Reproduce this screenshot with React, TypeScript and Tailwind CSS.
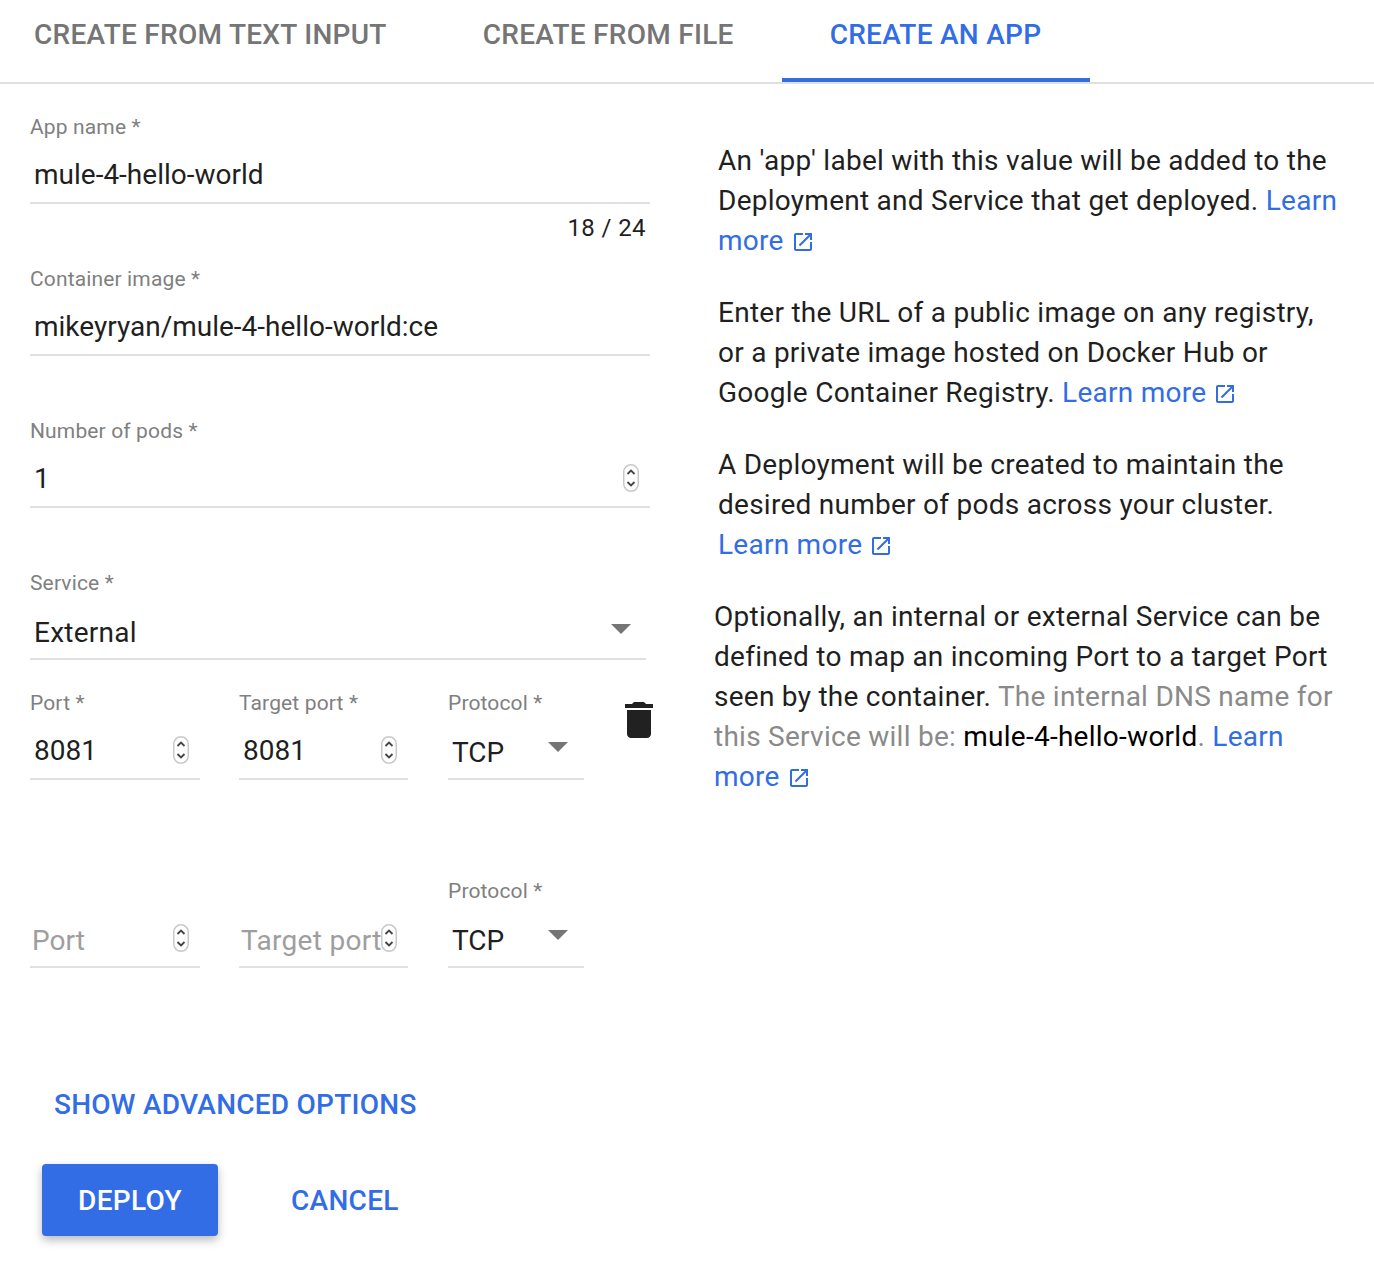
import React from "react";

const Spinner = () => (
  <svg width="16" height="28" viewBox="0 0 16 28" className="shrink-0 mt-[5px]">
    <rect x="0.75" y="0.75" width="14.5" height="26.5" rx="7.25" fill="#fff" stroke="#c9c9c9" strokeWidth="1.5" />
    <path d="M4.5 10 8 6.5 11.5 10" fill="none" stroke="#444" strokeWidth="1.8" />
    <path d="M4.5 18 8 21.5 11.5 18" fill="none" stroke="#444" strokeWidth="1.8" />
  </svg>
);

const Caret = () => (
  <svg width="20" height="10" viewBox="0 0 20 10" className="shrink-0">
    <path d="M0 0h20L10 10z" fill="#757575" />
  </svg>
);

const Ext = () => (
  <svg width="24" height="24" viewBox="0 0 24 24" fill="#326de6" className="inline-block align-[-4px] ml-[7px]">
    <path d="M19 19H5V5h7V3H5c-1.11 0-2 .9-2 2v14c0 1.1.89 2 2 2h14c1.1 0 2-.9 2-2v-7h-2v7zM14 3v2h3.59l-9.83 9.83 1.41 1.41L19 6.41V10h2V3h-7z" />
  </svg>
);

const Label = ({ children }: { children: React.ReactNode }) => (
  <div className="h-7 text-[21px] leading-[26px] text-[#808080] tracking-[0.14px] whitespace-nowrap">{children}</div>
);

const Field = ({
  label,
  children,
  className,
}: {
  label?: string;
  children: React.ReactNode;
  className?: string;
}) => (
  <div className={className}>
    <div className="h-7">{label ? <Label>{label}</Label> : null}</div>
    <div className="h-[62px] border-b-2 border-[#e0e0e0] text-[28px] leading-10 text-[#1f1f1f]">
      {children}
    </div>
  </div>
);

const Learn = ({ children }: { children: React.ReactNode }) => (
  <a className="text-[#326de6]">{children}</a>
);

export default function App() {
  return (
    <div className="w-[1374px] h-[1286px] bg-white font-['Roboto',sans-serif] overflow-hidden">
      <div className="flex h-[84px] border-b-2 border-[#e0e0e0] text-[28px] font-medium tracking-[0.28px]">
        <div className="pl-[34px] pr-[48px] h-[82px] pt-[15px] leading-10 text-[#757575]">CREATE FROM TEXT INPUT</div>
        <div className="px-[48px] h-[82px] pt-[15px] leading-10 text-[#757575]">CREATE FROM FILE</div>
        <div className="pl-[48px] pr-[49px] h-[82px] pt-[15px] leading-10 text-[#326de6] border-b-[4px] border-[#326de6]">CREATE AN APP</div>
      </div>

      <div className="flex">
        <div className="w-[620px] ml-[30px] shrink-0 pt-[30px]">
          <div className="h-[152px]">
            <Field label="App name *">
              <div className="pl-1 pt-[13px]">mule-4-hello-world</div>
            </Field>
            <div className="text-right pr-1 text-[24px] leading-7 mt-[10px] text-[#1f1f1f] tracking-[0.4px]">18 / 24</div>
          </div>
          <div className="h-[152px]">
            <Field label="Container image *">
              <div className="pl-1 pt-[13px]">mikeyryan/mule-4-hello-world:ce</div>
            </Field>
          </div>
          <div className="h-[152px]">
            <Field label="Number of pods *">
              <div className="pl-1 pt-[13px] pr-[11px] flex justify-between items-start">
                <span>1</span>
                <Spinner />
              </div>
            </Field>
          </div>
          <div className="h-[120px] w-[616px]">
            <Field label="Service *">
              <div className="pl-1 pt-[15px] pr-[15px] flex justify-between">
                <span className="tracking-[0.25px]">External</span>
                <span className="pt-[11px]"><Caret /></span>
              </div>
            </Field>
          </div>
          <div className="h-[188px] flex">
            <Field label="Port *" className="w-[170px] shrink-0">
              <div className="pl-1 pt-[13px] pr-[11px] flex justify-between items-start">
                <span>8081</span>
                <Spinner />
              </div>
            </Field>
            <Field label="Target port *" className="w-[169px] ml-[39px] shrink-0">
              <div className="pl-1 pt-[13px] pr-[11px] flex justify-between items-start">
                <span>8081</span>
                <Spinner />
              </div>
            </Field>
            <Field label="Protocol *" className="w-[136px] ml-[40px] shrink-0">
              <div className="pl-1 pt-[15px] pr-[16px] flex justify-between">
                <span>TCP</span>
                <span className="pt-[9px]"><Caret /></span>
              </div>
            </Field>
            <svg width="48" height="48" viewBox="0 0 24 24" fill="#212121" className="ml-[31px] mt-[6px] shrink-0">
              <path d="M6 19c0 1.1.9 2 2 2h8c1.1 0 2-.9 2-2V7H6v12zM19 4h-3.5l-1-1h-5l-1 1H5v2h14V4z" />
            </svg>
          </div>
          <div className="h-[207px] flex">
            <Field className="w-[170px] shrink-0">
              <div className="pl-[2px] pt-[15px] pr-[11px] flex justify-between items-start text-[#9e9e9e]">
                <span>Port</span>
                <span className="-mt-[2px]"><Spinner /></span>
              </div>
            </Field>
            <Field className="w-[169px] ml-[39px] shrink-0">
              <div className="pl-[2px] pt-[15px] pr-[11px] flex justify-between items-start text-[#9e9e9e]">
                <span className="w-[138px] whitespace-nowrap tracking-[0.3px]">Target port</span>
                <span className="-mt-[2px]"><Spinner /></span>
              </div>
            </Field>
            <Field label="Protocol *" className="w-[136px] ml-[40px] shrink-0">
              <div className="pl-1 pt-[15px] pr-[16px] flex justify-between">
                <span>TCP</span>
                <span className="pt-[9px]"><Caret /></span>
              </div>
            </Field>
          </div>
          <div className="h-[40px] pl-[24px] text-[28px] leading-10 font-medium text-[#326de6] tracking-[0.25px]">
            SHOW ADVANCED OPTIONS
          </div>
          <div className="flex items-center mt-[39px] ml-[12px]">
            <div className="w-[176px] h-[72px] pt-[2px] rounded-[4px] bg-[#326de6] text-white text-[28px] font-medium flex items-center justify-center shadow-[0_4px_10px_rgba(0,0,0,0.28)] tracking-[0.3px]">
              DEPLOY
            </div>
            <div className="ml-[73px] pt-[2px] text-[28px] font-medium text-[#326de6] tracking-[0.3px]">CANCEL</div>
          </div>
        </div>

        <div className="ml-[68px] w-[640px] pt-[57px] text-[28px] leading-10 text-[#1f1f1f] tracking-[0.26px]">
          <p className="w-[630px]">
            An 'app' label with this value will be added to the Deployment and Service that get deployed.{" "}
            <Learn>Learn more<Ext /></Learn>
          </p>
          <p className="mt-8 w-[620px]">
            Enter the URL of a public image on any registry, or a private image hosted on Docker Hub or Google Container Registry.{" "}
            <Learn>Learn more<Ext /></Learn>
          </p>
          <p className="mt-8 w-[620px]">
            A Deployment will be created to maintain the desired number of pods across your cluster.{" "}
            <Learn>Learn more<Ext /></Learn>
          </p>
          <p className="mt-8 -ml-1 w-[630px]">
            Optionally, an internal or external Service can be defined to map an incoming Port to a target Port seen by the container.{" "}
            <span className="text-[#8a8a8a]">
              The internal DNS name for this Service will be: <span className="text-black">mule-4-hello-world</span>.
            </span>{" "}
            <Learn>Learn more<Ext /></Learn>
          </p>
        </div>
      </div>
    </div>
  );
}
